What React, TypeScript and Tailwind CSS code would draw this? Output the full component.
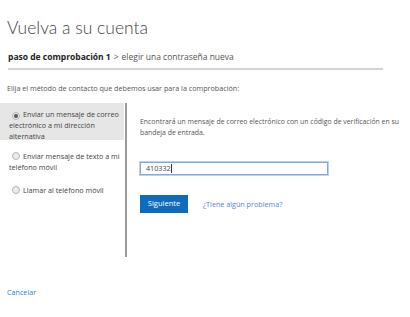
import React from "react";

function Radio({ checked }: { checked?: boolean }) {
  return (
    <span className="inline-flex items-center justify-center w-[8px] h-[8px] rounded-full border border-[#b5b5b5] bg-[#eaeaea] mr-[3px] align-[-1px]">
      {checked && <span className="w-[4px] h-[4px] rounded-full bg-[#555]" />}
    </span>
  );
}

export default function App() {
  return (
    <div
      className="w-[410px] h-[317px] bg-white text-[#505050] overflow-hidden"
      style={{ fontFamily: '"Open Sans", "Noto Sans", sans-serif' }}
    >
      <div
        className="pl-[7px] pt-[16px] text-[17.5px] leading-[23px] font-light text-[#444]"
        style={{ fontFamily: 'Lato, "Open Sans", sans-serif' }}
      >
        Vuelva a su cuenta
      </div>
      <div className="pl-[8px] mt-[12px] text-[8.5px] leading-[12px] text-[#555]">
        <span className="font-bold text-[#222]">paso de comprobación 1</span>
        <span className="mx-[3px]">&gt;</span>
        <span>elegir una contraseña nueva</span>
      </div>
      <div className="ml-[8px] mt-[5px] w-[375px] h-[2px] bg-[#d4d4d4]" />
      <div className="pl-[7px] mt-[13px] text-[7.2px] leading-[10px] text-[#555]">
        Elija el método de contacto que debemos usar para la comprobación:
      </div>
      <div className="flex mt-[10px]">
        <div className="w-[124px] text-[7.2px] leading-[11px] text-[#444] whitespace-nowrap">
          <div className="h-[37px] bg-[#e6e6e6] pl-[9px] pr-[4px] pt-[6px]">
            <div className="pl-[3px]">
              <Radio checked />
              Enviar un mensaje de correo
            </div>
            <div>electrónico a mi dirección</div>
            <div>alternativa</div>
          </div>
          <div className="pl-[9px] pt-[11px]">
            <div className="pl-[3px]">
              <Radio />
              Enviar mensaje de texto a mi
            </div>
            <div>teléfono móvil</div>
          </div>
          <div className="pl-[12px] pt-[12px]">
            <Radio />
            Llamar al teléfono móvil
          </div>
        </div>
        <div className="w-[2px] h-[154px] bg-[#9a9a9a] ml-[1px]" />
        <div className="pl-[13px] pt-[13px]">
          <div className="w-[262px] text-[6.9px] leading-[11px] text-[#555]">
            Encontrará un mensaje de correo electrónico con un código de verificación en su bandeja de entrada.
          </div>
          <div className="mt-[24px] w-[188px] h-[13px] border border-[#7fa9e6] shadow-[0_0_0_1px_#b9d1f3] flex items-center pl-[5px] text-[7.2px] text-[#444]">
            410332<span className="w-px h-[9px] bg-[#333]" />
          </div>
          <div className="flex items-center mt-[20px]">
            <div className="w-[48px] h-[18px] bg-[#0f6cbd] text-white text-[7.5px] flex items-center justify-center">
              Siguiente
            </div>
            <div className="ml-[15px] text-[7.2px] text-[#4a89dc]">¿Tiene algún problema?</div>
          </div>
        </div>
      </div>
      <div className="pl-[7px] mt-[30px] text-[7.2px] text-[#2b7cd3]">Cancelar</div>
    </div>
  );
}
